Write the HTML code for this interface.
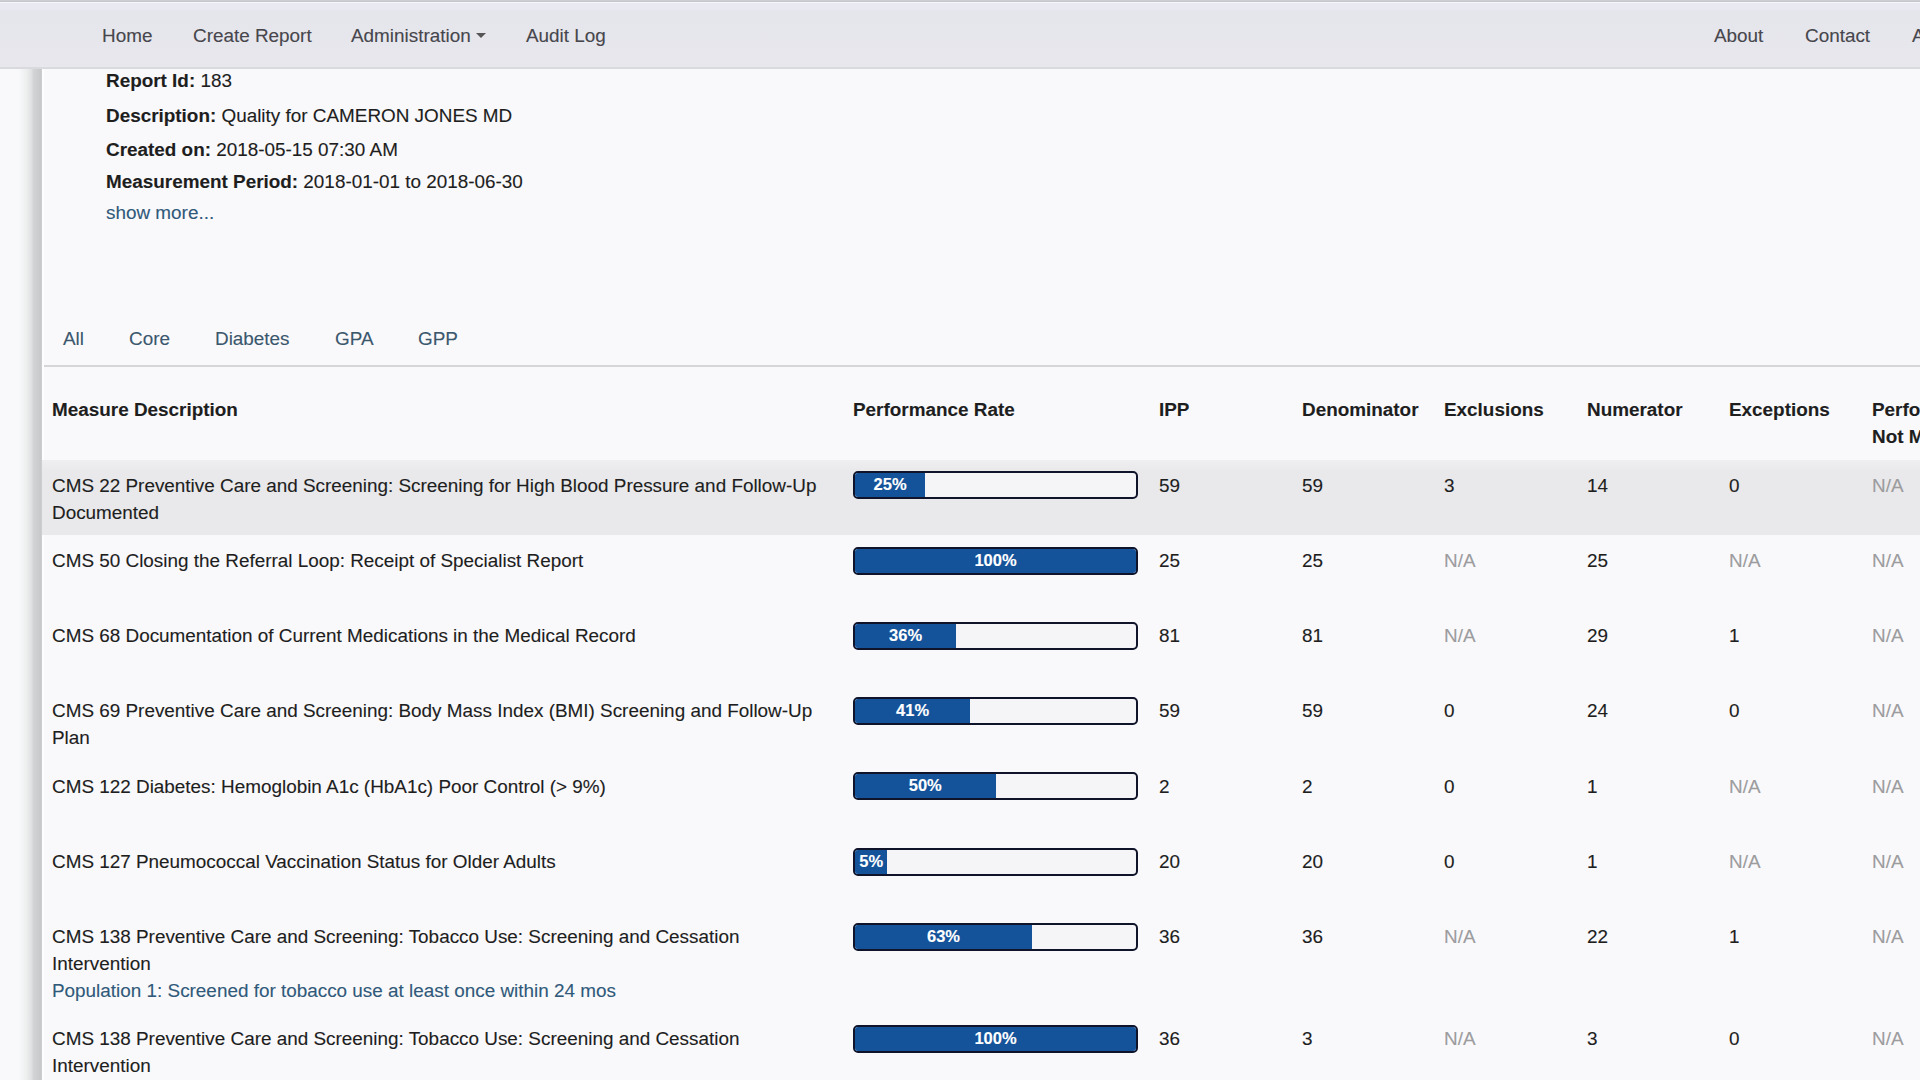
<!DOCTYPE html>
<html><head><meta charset="utf-8">
<style>
*{box-sizing:border-box}
html,body{margin:0;padding:0;width:1920px;height:1080px;overflow:hidden;background:#f9f9fb;font-family:"Liberation Sans",sans-serif;font-size:18.9px;line-height:27px;color:#1e1e1e;-webkit-text-stroke:0.12px currentColor}
#topline{position:absolute;left:0;top:0;width:1920px;height:2px;background:linear-gradient(#d2d2da,#bfbfc7)}
#nav{position:absolute;left:0;top:2px;width:1920px;height:67px;background:linear-gradient(#e9e9f1,#e9e9f1 6px,#e5e5ec 8px,#e7e7ed);border-top:1px solid #f8f8fc;border-bottom:2px solid #d9dade}
#nav a{position:absolute;top:19.3px;color:#46464c;text-decoration:none;white-space:nowrap}
.caret{display:inline-block;width:0;height:0;margin-left:5px;vertical-align:middle;border-top:5px solid #555;border-left:5px solid transparent;border-right:5px solid transparent;position:relative;top:-2px}
#bar{position:absolute;left:18px;top:69px;width:24px;height:1011px;background:linear-gradient(to right,rgba(240,243,243,0),#edefef 35%,#e0e2e3 55%,#d2d4d5 64%,#cdcecf 80%,#c7c8ca 96%,#d3d4d6)}
#barw{position:absolute;left:42px;top:69px;width:2px;height:1011px;background:#fdfdfd}
.info{position:absolute;left:106px;white-space:nowrap}
.info b{font-weight:700}
.link{color:#30597a}
.tab{position:absolute;top:325.2px;color:#3b576d;white-space:nowrap}
#tabline{position:absolute;left:44px;top:365px;width:1876px;height:2px;background:#d6d6d8}
.th{position:absolute;font-weight:700;white-space:nowrap}
.row{position:absolute;left:42px;width:1878px}
.row.hl{background:linear-gradient(#efeff1,#e9e9eb 12px,#e9e9eb)}
.c{position:absolute;white-space:nowrap}
.na{color:#9c9c9e}
.pb{position:absolute;left:853px;width:285px;height:28px;border:2px solid #10142a;border-radius:5px;background:#f5f5f7;overflow:hidden}
.pb i{position:absolute;left:0;top:0;bottom:0;background:#14529a;color:#fff;font-style:normal;font-size:16.5px;line-height:22px;text-align:center;font-weight:700}
</style></head><body>
<div id="topline"></div>
<div id="nav">
<a style="left:102px">Home</a>
<a style="left:193px">Create Report</a>
<a style="left:351px">Administration<span class="caret"></span></a>
<a style="left:526px">Audit Log</a>
<a style="left:1714px">About</a>
<a style="left:1805px">Contact</a>
<a style="left:1912px">A</a>
</div>
<div id="bar"></div><div id="barw"></div>

<div class="info" style="top:67px"><b>Report Id:</b> 183</div>
<div class="info" style="top:102px"><b>Description:</b> Quality for CAMERON JONES MD</div>
<div class="info" style="top:136px"><b>Created on:</b> 2018-05-15 07:30 AM</div>
<div class="info" style="top:168px"><b>Measurement Period:</b> 2018-01-01 to 2018-06-30</div>
<div class="info link" style="top:199px">show more...</div>

<div class="tab" style="left:63px">All</div>
<div class="tab" style="left:129px">Core</div>
<div class="tab" style="left:215px">Diabetes</div>
<div class="tab" style="left:335px">GPA</div>
<div class="tab" style="left:418px">GPP</div>
<div id="tabline"></div>

<div class="th" style="left:52px;top:396px">Measure Description</div>
<div class="th" style="left:853px;top:396px">Performance Rate</div>
<div class="th" style="left:1159px;top:396px">IPP</div>
<div class="th" style="left:1302px;top:396px">Denominator</div>
<div class="th" style="left:1444px;top:396px">Exclusions</div>
<div class="th" style="left:1587px;top:396px">Numerator</div>
<div class="th" style="left:1729px;top:396px">Exceptions</div>
<div class="th" style="left:1872px;top:396px">Performance<br>Not Met</div>

<!-- ROWS -->
<div class="row hl" style="top:460px;height:75px"></div>
<div class="c" style="left:52px;top:471.7px">CMS 22 Preventive Care and Screening: Screening for High Blood Pressure and Follow-Up<br>Documented</div>
<div class="pb" style="top:471.25px"><i style="width:70.25px">25%</i></div>
<div class="c" style="left:1159px;top:471.7px">59</div>
<div class="c" style="left:1302px;top:471.7px">59</div>
<div class="c" style="left:1444px;top:471.7px">3</div>
<div class="c" style="left:1587px;top:471.7px">14</div>
<div class="c" style="left:1729px;top:471.7px">0</div>
<div class="c na" style="left:1872px;top:471.7px">N/A</div>
<div class="c" style="left:52px;top:546.95px">CMS 50 Closing the Referral Loop: Receipt of Specialist Report</div>
<div class="pb" style="top:546.5px"><i style="width:281.00px">100%</i></div>
<div class="c" style="left:1159px;top:546.95px">25</div>
<div class="c" style="left:1302px;top:546.95px">25</div>
<div class="c na" style="left:1444px;top:546.95px">N/A</div>
<div class="c" style="left:1587px;top:546.95px">25</div>
<div class="c na" style="left:1729px;top:546.95px">N/A</div>
<div class="c na" style="left:1872px;top:546.95px">N/A</div>
<div class="c" style="left:52px;top:622.2px">CMS 68 Documentation of Current Medications in the Medical Record</div>
<div class="pb" style="top:621.75px"><i style="width:101.16px">36%</i></div>
<div class="c" style="left:1159px;top:622.2px">81</div>
<div class="c" style="left:1302px;top:622.2px">81</div>
<div class="c na" style="left:1444px;top:622.2px">N/A</div>
<div class="c" style="left:1587px;top:622.2px">29</div>
<div class="c" style="left:1729px;top:622.2px">1</div>
<div class="c na" style="left:1872px;top:622.2px">N/A</div>
<div class="c" style="left:52px;top:697.45px">CMS 69 Preventive Care and Screening: Body Mass Index (BMI) Screening and Follow-Up<br>Plan</div>
<div class="pb" style="top:697.0px"><i style="width:115.21px">41%</i></div>
<div class="c" style="left:1159px;top:697.45px">59</div>
<div class="c" style="left:1302px;top:697.45px">59</div>
<div class="c" style="left:1444px;top:697.45px">0</div>
<div class="c" style="left:1587px;top:697.45px">24</div>
<div class="c" style="left:1729px;top:697.45px">0</div>
<div class="c na" style="left:1872px;top:697.45px">N/A</div>
<div class="c" style="left:52px;top:772.7px">CMS 122 Diabetes: Hemoglobin A1c (HbA1c) Poor Control (&gt; 9%)</div>
<div class="pb" style="top:772.25px"><i style="width:140.50px">50%</i></div>
<div class="c" style="left:1159px;top:772.7px">2</div>
<div class="c" style="left:1302px;top:772.7px">2</div>
<div class="c" style="left:1444px;top:772.7px">0</div>
<div class="c" style="left:1587px;top:772.7px">1</div>
<div class="c na" style="left:1729px;top:772.7px">N/A</div>
<div class="c na" style="left:1872px;top:772.7px">N/A</div>
<div class="c" style="left:52px;top:847.95px">CMS 127 Pneumococcal Vaccination Status for Older Adults</div>
<div class="pb" style="top:847.5px"><i style="width:32.40px">5%</i></div>
<div class="c" style="left:1159px;top:847.95px">20</div>
<div class="c" style="left:1302px;top:847.95px">20</div>
<div class="c" style="left:1444px;top:847.95px">0</div>
<div class="c" style="left:1587px;top:847.95px">1</div>
<div class="c na" style="left:1729px;top:847.95px">N/A</div>
<div class="c na" style="left:1872px;top:847.95px">N/A</div>
<div class="c" style="left:52px;top:923.2px">CMS 138 Preventive Care and Screening: Tobacco Use: Screening and Cessation<br>Intervention<br><span class="link">Population 1: Screened for tobacco use at least once within 24 mos</span></div>
<div class="pb" style="top:922.75px"><i style="width:177.03px">63%</i></div>
<div class="c" style="left:1159px;top:923.2px">36</div>
<div class="c" style="left:1302px;top:923.2px">36</div>
<div class="c na" style="left:1444px;top:923.2px">N/A</div>
<div class="c" style="left:1587px;top:923.2px">22</div>
<div class="c" style="left:1729px;top:923.2px">1</div>
<div class="c na" style="left:1872px;top:923.2px">N/A</div>
<div class="c" style="left:52px;top:1025.4px">CMS 138 Preventive Care and Screening: Tobacco Use: Screening and Cessation<br>Intervention</div>
<div class="pb" style="top:1024.95px"><i style="width:281.00px">100%</i></div>
<div class="c" style="left:1159px;top:1025.4px">36</div>
<div class="c" style="left:1302px;top:1025.4px">3</div>
<div class="c na" style="left:1444px;top:1025.4px">N/A</div>
<div class="c" style="left:1587px;top:1025.4px">3</div>
<div class="c" style="left:1729px;top:1025.4px">0</div>
<div class="c na" style="left:1872px;top:1025.4px">N/A</div>
</body></html>
